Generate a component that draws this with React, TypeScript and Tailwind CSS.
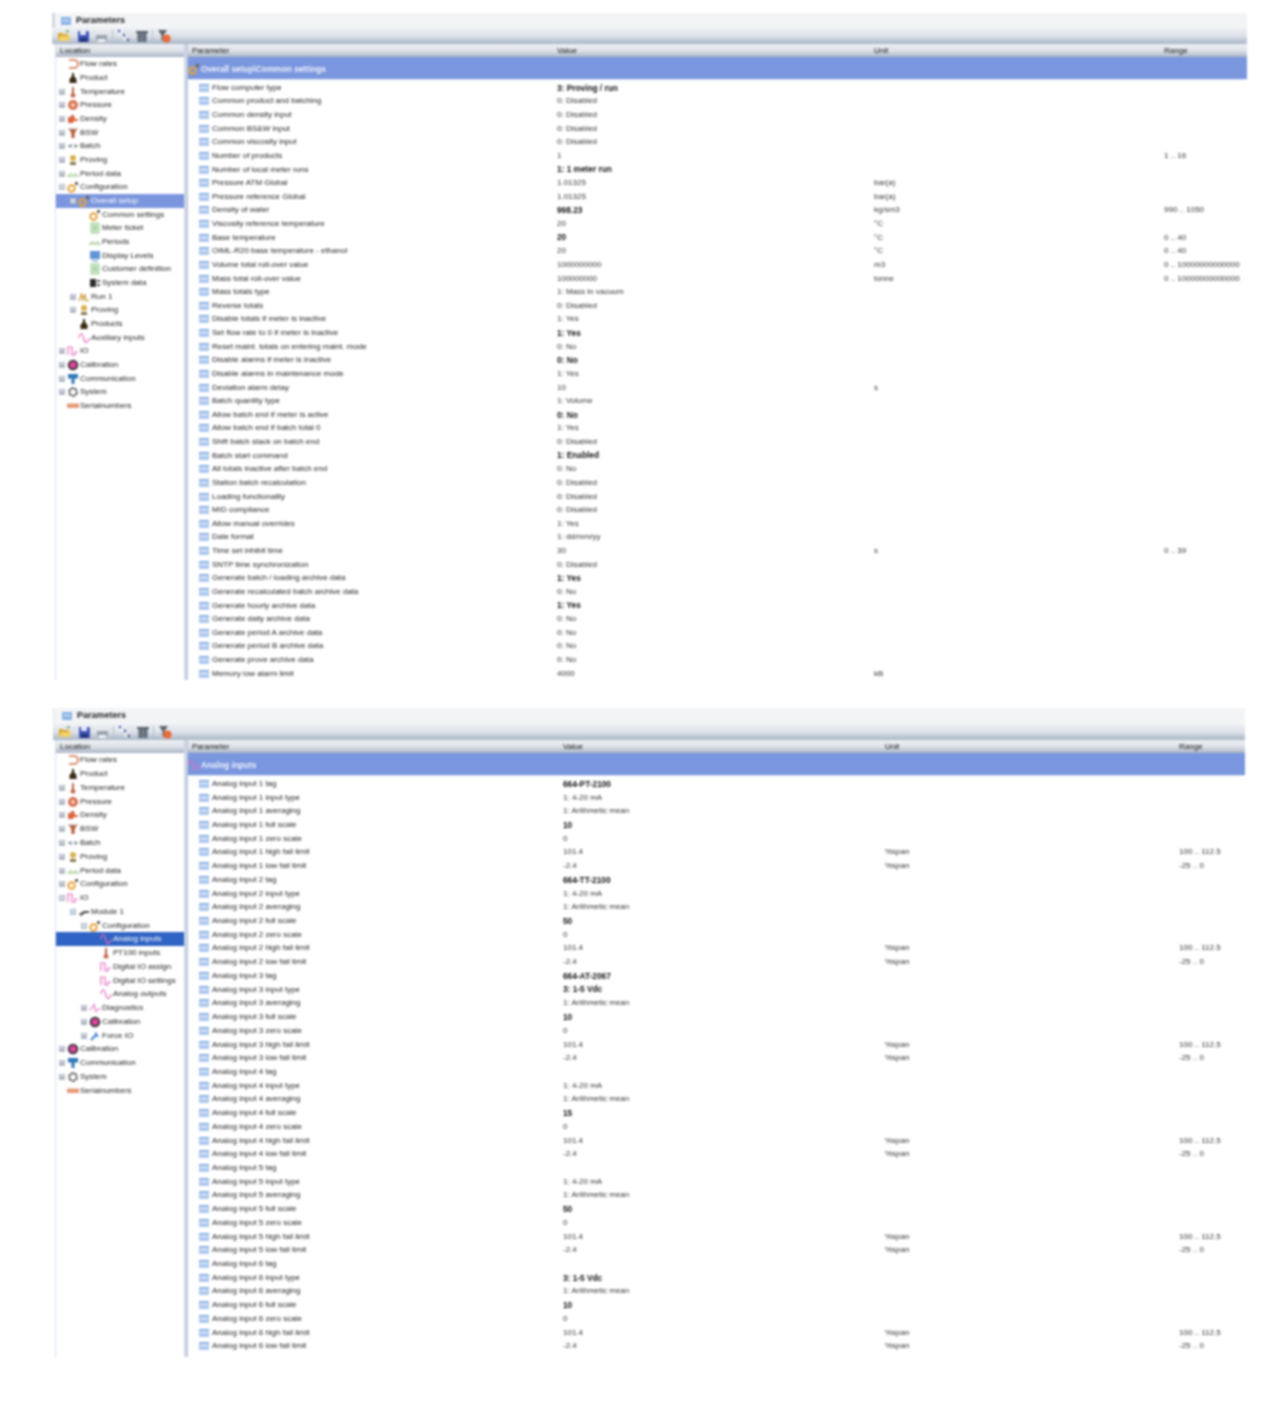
import React from "react";

type Row = { name: string; value?: string; unit?: string; range?: string; bold?: boolean };
type Kind =
  | "flow" | "bottle" | "thermo" | "gauge" | "density" | "bsw" | "batch" | "prove" | "period"
  | "config" | "ticket" | "display" | "system" | "run" | "wave" | "square" | "calib" | "comm"
  | "gear" | "serial" | "module" | "diag" | "wrench";
type TreeItem = { label: string; level: number; exp?: "+" | "-"; icon: Kind; selected?: boolean };

const overallRows: Row[] = [
  { name: "Flow computer type", value: "3: Proving / run", bold: true },
  { name: "Common product and batching", value: "0: Disabled" },
  { name: "Common density input", value: "0: Disabled" },
  { name: "Common BS&W input", value: "0: Disabled" },
  { name: "Common viscosity input", value: "0: Disabled" },
  { name: "Number of products", value: "1", range: "1 .. 16" },
  { name: "Number of local meter runs", value: "1: 1 meter run", bold: true },
  { name: "Pressure ATM Global", value: "1.01325", unit: "bar(a)" },
  { name: "Pressure reference Global", value: "1.01325", unit: "bar(a)" },
  { name: "Density of water", value: "998.23", unit: "kg/sm3", range: "990 .. 1050", bold: true },
  { name: "Viscosity reference temperature", value: "20", unit: "°C" },
  { name: "Base temperature", value: "20", unit: "°C", range: "0 .. 40", bold: true },
  { name: "OIML-R20 base temperature - ethanol", value: "20", unit: "°C", range: "0 .. 40" },
  { name: "Volume total roll-over value", value: "1000000000", unit: "m3", range: "0 .. 10000000000000" },
  { name: "Mass total roll-over value", value: "100000000", unit: "tonne", range: "0 .. 10000000000000" },
  { name: "Mass totals type", value: "1: Mass in vacuum" },
  { name: "Reverse totals", value: "0: Disabled" },
  { name: "Disable totals if meter is inactive", value: "1: Yes" },
  { name: "Set flow rate to 0 if meter is inactive", value: "1: Yes", bold: true },
  { name: "Reset maint. totals on entering maint. mode", value: "0: No" },
  { name: "Disable alarms if meter is inactive", value: "0: No", bold: true },
  { name: "Disable alarms in maintenance mode", value: "1: Yes" },
  { name: "Deviation alarm delay", value: "10", unit: "s" },
  { name: "Batch quantity type", value: "1: Volume" },
  { name: "Allow batch end if meter is active", value: "0: No", bold: true },
  { name: "Allow batch end if batch total 0", value: "1: Yes" },
  { name: "Shift batch stack on batch end", value: "0: Disabled" },
  { name: "Batch start command", value: "1: Enabled", bold: true },
  { name: "All totals inactive after batch end", value: "0: No" },
  { name: "Station batch recalculation", value: "0: Disabled" },
  { name: "Loading functionality", value: "0: Disabled" },
  { name: "MID compliance", value: "0: Disabled" },
  { name: "Allow manual overrides", value: "1: Yes" },
  { name: "Date format", value: "1: dd/mm/yy" },
  { name: "Time set inhibit time", value: "30", unit: "s", range: "0 .. 39" },
  { name: "SNTP time synchronization", value: "0: Disabled" },
  { name: "Generate batch / loading archive data", value: "1: Yes", bold: true },
  { name: "Generate recalculated batch archive data", value: "0: No" },
  { name: "Generate hourly archive data", value: "1: Yes", bold: true },
  { name: "Generate daily archive data", value: "0: No" },
  { name: "Generate period A archive data", value: "0: No" },
  { name: "Generate period B archive data", value: "0: No" },
  { name: "Generate prove archive data", value: "0: No" },
  { name: "Memory low alarm limit", value: "4000", unit: "kB" },
];

const analogSetup = [
  { tag: "664-PT-2100", type: "1: 4-20 mA", full: "10" },
  { tag: "664-TT-2100", type: "1: 4-20 mA", full: "50" },
  { tag: "664-AT-2067", type: "3: 1-5 Vdc", full: "10", typeBold: true },
  { tag: "", type: "1: 4-20 mA", full: "15" },
  { tag: "", type: "1: 4-20 mA", full: "50" },
  { tag: "", type: "3: 1-5 Vdc", full: "10", typeBold: true },
];

const analogRows: Row[] = analogSetup.flatMap((a, i) => {
  const n = `Analog input ${i + 1}`;
  return [
    { name: `${n} tag`, value: a.tag, bold: true },
    { name: `${n} input type`, value: a.type, bold: a.typeBold },
    { name: `${n} averaging`, value: "1: Arithmetic mean" },
    { name: `${n} full scale`, value: a.full, bold: true },
    { name: `${n} zero scale`, value: "0" },
    { name: `${n} high fail limit`, value: "101.4", unit: "%span", range: "100 .. 112.5" },
    { name: `${n} low fail limit`, value: "-2.4", unit: "%span", range: "-25 .. 0" },
  ];
});

const treeTop: TreeItem[] = [
  { label: "Flow rates", level: 0, icon: "flow" },
  { label: "Product", level: 0, icon: "bottle" },
  { label: "Temperature", level: 0, exp: "+", icon: "thermo" },
  { label: "Pressure", level: 0, exp: "+", icon: "gauge" },
  { label: "Density", level: 0, exp: "+", icon: "density" },
  { label: "BSW", level: 0, exp: "+", icon: "bsw" },
  { label: "Batch", level: 0, exp: "+", icon: "batch" },
  { label: "Proving", level: 0, exp: "+", icon: "prove" },
  { label: "Period data", level: 0, exp: "+", icon: "period" },
];

const treeBottom: TreeItem[] = [
  { label: "Calibration", level: 0, exp: "+", icon: "calib" },
  { label: "Communication", level: 0, exp: "+", icon: "comm" },
  { label: "System", level: 0, exp: "+", icon: "gear" },
  { label: "Serialnumbers", level: 0, icon: "serial" },
];

const overallTree: TreeItem[] = [
  ...treeTop,
  { label: "Configuration", level: 0, exp: "-", icon: "config" },
  { label: "Overall setup", level: 1, exp: "-", icon: "config", selected: true },
  { label: "Common settings", level: 2, icon: "config" },
  { label: "Meter ticket", level: 2, icon: "ticket" },
  { label: "Periods", level: 2, icon: "period" },
  { label: "Display Levels", level: 2, icon: "display" },
  { label: "Customer definition", level: 2, icon: "ticket" },
  { label: "System data", level: 2, icon: "system" },
  { label: "Run 1", level: 1, exp: "+", icon: "run" },
  { label: "Proving", level: 1, exp: "+", icon: "prove" },
  { label: "Products", level: 1, icon: "bottle" },
  { label: "Auxiliary inputs", level: 1, icon: "wave" },
  { label: "IO", level: 0, exp: "+", icon: "square" },
  ...treeBottom,
];

const analogTree: TreeItem[] = [
  ...treeTop,
  { label: "Configuration", level: 0, exp: "+", icon: "config" },
  { label: "IO", level: 0, exp: "-", icon: "square" },
  { label: "Module 1", level: 1, exp: "-", icon: "module" },
  { label: "Configuration", level: 2, exp: "-", icon: "config" },
  { label: "Analog inputs", level: 3, icon: "wave", selected: true },
  { label: "PT100 inputs", level: 3, icon: "thermo" },
  { label: "Digital IO assign", level: 3, icon: "square" },
  { label: "Digital IO settings", level: 3, icon: "square" },
  { label: "Analog outputs", level: 3, icon: "wave" },
  { label: "Diagnostics", level: 2, exp: "+", icon: "diag" },
  { label: "Calibration", level: 2, exp: "+", icon: "calib" },
  { label: "Force IO", level: 2, exp: "+", icon: "wrench" },
  ...treeBottom,
];

const indent = ["pl-[3px]", "pl-[14px]", "pl-[25px]", "pl-[36px]"];

function TreeIcon({ kind }: { kind: Kind }) {
  const box = { width: 12, height: 12, viewBox: "0 0 12 12", fill: "none" };
  switch (kind) {
    case "flow":
      return <svg {...box}><path d="M2 2h5a3.5 3.5 0 0 1 0 8H2" stroke="#d0714e" strokeWidth="1.6" /></svg>;
    case "bottle":
      return <svg {...box}><path d="M5 1h2v3l2.500 3v4h-7V7L5 4z" fill="#3a2a12" /></svg>;
    case "thermo":
      return <svg {...box}><path d="M5 1h2v6l1.500 2a2.500 2.500 0 1 1-5 0L5 7z" fill="#c0654a" /></svg>;
    case "gauge":
      return <svg {...box}><circle cx="6" cy="6" r="5" fill="#d9714f" /><circle cx="6" cy="6" r="2" fill="#f4d3c4" /></svg>;
    case "density":
      return <svg {...box}><path d="M1 10V4h3V2h3l1 4h3v2H7l-1 2z" fill="#d9653f" /></svg>;
    case "bsw":
      return <svg {...box}><path d="M1 1h10L7.500 6v5h-3V6z" fill="#b5552f" /><path d="M2 1h8v1.500H2z" fill="#c9c9c9" /></svg>;
    case "batch":
      return <svg {...box}><path d="M1 6h3M8 6h3" stroke="#7aa35c" strokeWidth="1.400" /><path d="M4 4v4M8 4v4" stroke="#5a6fa0" /></svg>;
    case "prove":
      return <svg {...box}><circle cx="6" cy="4" r="3" fill="#d9b04a" /><path d="M3 8h6v3H3z" fill="#8a7a50" /></svg>;
    case "period":
      return <svg {...box}><path d="M0 8h12" stroke="#9cc58a" strokeWidth="1.200" /><path d="M2 7l1.500-2L5 7M7 7l1.500-2L10 7" stroke="#9cc58a" /></svg>;
    case "config":
      return <svg {...box}><circle cx="4.500" cy="7.500" r="3.200" stroke="#e8a13a" strokeWidth="2" /><path d="M8 1h3v3H8z" fill="#66625a" /></svg>;
    case "ticket":
      return <svg {...box}><path d="M2 1h8v10H2z" fill="#c9e6c4" stroke="#a6cfa0" /><path d="M4 5h4M4 7h4" stroke="#8fbf88" /></svg>;
    case "display":
      return <svg {...box}><path d="M1 1h10v8H1z" fill="#5f95d6" /><path d="M3 10h6v1.500H3z" fill="#88a9d4" /></svg>;
    case "system":
      return <svg {...box}><path d="M1 2h6v8H1z" fill="#2c2c2c" /><path d="M8 3h3v2H8zM8 7h3v2H8z" fill="#555" /></svg>;
    case "run":
      return <svg {...box}><path d="M1 10l2.500-7L5 9l2-6 1 7 3-1" stroke="#c9973a" strokeWidth="1.200" /></svg>;
    case "wave":
      return <svg {...box}><path d="M0.500 6c2-6 3.500-6 5 0s3.500 6 6 0" stroke="#e56fc0" strokeWidth="1.200" /></svg>;
    case "square":
      return <svg {...box}><path d="M1 10V2h4v8h3V7h3" stroke="#e56fc0" strokeWidth="1.200" /></svg>;
    case "calib":
      return <svg {...box}><circle cx="6" cy="6" r="5.300" fill="#3d3640" /><circle cx="6" cy="6" r="3.300" fill="#e0459a" /></svg>;
    case "comm":
      return <svg {...box}><path d="M1 1h10v4.500H7.500V11h-3V5.500H1z" fill="#2f76b8" /></svg>;
    case "gear":
      return <svg {...box}><circle cx="6" cy="6" r="3.800" stroke="#555" strokeWidth="2" strokeDasharray="3 0.800" /></svg>;
    case "serial":
      return <svg {...box}><path d="M0 3.500h12v4.500H0z" fill="#e39a78" /></svg>;
    case "module":
      return <svg {...box}><path d="M1 8l5-3h5v2H7L3 10z" fill="#4a4a4a" /></svg>;
    case "diag":
      return <svg {...box}><path d="M0 7h3l2-5 2 8 1.500-3H12" stroke="#e56fc0" /></svg>;
    case "wrench":
      return <svg {...box}><path d="M2 10l5-5M7 2.500a2.500 2.500 0 0 0 2.500 3.500" stroke="#3f7fc9" strokeWidth="2" /></svg>;
  }
}

function ParamIcon() {
  return (
    <svg width="10" height="8" viewBox="0 0 10 8" className="shrink-0">
      <rect width="10" height="8" fill="#aec8ee" />
      <path d="M1.500 3.500h7" stroke="#f2f6fd" />
      <path d="M0 0.500h10" stroke="#7fa5de" />
    </svg>
  );
}

function Toolbar() {
  return (
    <div className="flex items-center h-[16px] shrink-0 pl-[5px] bg-gradient-to-b from-[#eef1f4] via-[#dde2e9] to-[#aab5c5]">
      <svg width="14" height="14" viewBox="0 0 14 14" className="mr-[6px]">
        <path d="M1 4h4l1 1h5v7H1z" fill="#d9a72e" />
        <path d="M3 7h11l-2.500 5H1z" fill="#f2d166" />
        <path d="M8 3l3-2 1 2z" fill="#46813a" />
      </svg>
      <svg width="13" height="13" viewBox="0 0 13 13" className="mr-[5px]">
        <path d="M1 1h10l1 1v10H1z" fill="#3f55b5" />
        <path d="M3 1h6v4H3z" fill="#dfe6f6" />
        <path d="M3 8h7v4H3z" fill="#24347f" />
      </svg>
      <svg width="13" height="13" viewBox="0 0 13 13" className="mr-[4px]">
        <path d="M3 1h6v4H3z" fill="#e6e8ec" />
        <path d="M1 5h11v5H1z" fill="#9aa3ae" />
        <path d="M3 9h7v3H3z" fill="#f0f1f4" />
      </svg>
      <div className="w-px h-[12px] bg-[#b4bdcb] mr-[4px]" />
      <svg width="13" height="14" viewBox="0 0 13 14" className="mr-[6px]">
        <path d="M2 1v5h5M7 6v5h3" stroke="#f4f6fa" strokeWidth="1.200" fill="none" />
        <path d="M1 1h2v2H1zM6 5h2v2H6zM10 10h2v2h-2z" fill="#2b3f9e" />
      </svg>
      <svg width="12" height="13" viewBox="0 0 12 13" className="mr-[4px]">
        <path d="M0 1h12v2H0z" fill="#56606c" />
        <path d="M1 3h10v9H1z" fill="#7c8794" />
        <path d="M4 3v9M8 3v9" stroke="#3d4651" />
      </svg>
      <div className="w-px h-[12px] bg-[#b4bdcb] mr-[4px]" />
      <svg width="14" height="14" viewBox="0 0 14 14">
        <path d="M1 1h9L6.500 6v6l-2-1V6z" fill="#59616b" />
        <circle cx="9.500" cy="9.500" r="4" fill="#ea6a38" />
      </svg>
    </div>
  );
}

function HeaderBar({ className, children }: { className: string; children: React.ReactNode }) {
  return (
    <div className={`h-[13px] shrink-0 items-center pt-px bg-gradient-to-b from-[#eceff3] via-[#dfe3e9] to-[#a9b4c4] text-[8px] text-[#111] ${className}`}>
      {children}
    </div>
  );
}

function Tree({ items, rowClass, selectedClass }: { items: TreeItem[]; rowClass: string; selectedClass: string }) {
  return (
    <div className="w-[129px] shrink-0 flex flex-col border-l border-[#d5dfee]">
      <HeaderBar className="flex pl-[4px]">Location</HeaderBar>
      <div className="pt-[0.500px]">
        {items.map((item, i) => (
          <div
            key={i}
            className={`flex items-center text-[8px] whitespace-nowrap ${rowClass} ${indent[item.level]} ${
              item.selected ? `${selectedClass} text-white` : "text-[#222]"
            }`}
          >
            <span className="w-[7px] shrink-0 flex items-center">
              {item.exp && (
                <span className="w-[6px] h-[6px] bg-[#dfe5ee] border-[0.500px] border-[#aab4c4] flex items-center justify-center text-[6px] leading-none text-[#444]">
                  {item.exp}
                </span>
              )}
            </span>
            <span className="w-[13px] shrink-0 flex items-center justify-center">
              <TreeIcon kind={item.icon} />
            </span>
            <span className="ml-[1px]">{item.label}</span>
          </div>
        ))}
      </div>
    </div>
  );
}

function ParamGrid({
  title,
  icon,
  rows,
  gridClass,
  rowClass,
}: {
  title: string;
  icon: Kind;
  rows: Row[];
  gridClass: string;
  rowClass: string;
}) {
  return (
    <div className="flex-1 min-w-0 flex flex-col">
      <HeaderBar className={`grid ${gridClass}`}>
        <span className="pl-[4px]">Parameter</span>
        <span>Value</span>
        <span>Unit</span>
        <span>Range</span>
      </HeaderBar>
      <div className="h-[23px] shrink-0 flex items-center pt-[2px] bg-[#7a96de] border-b border-[#dbe3f7] text-[#eef2fc] font-bold text-[8.300px]">
        <span className="w-[13px] flex justify-start">
          <TreeIcon kind={icon} />
        </span>
        <span>{title}</span>
      </div>
      <div className="pt-px text-[8px] text-[#222]">
        {rows.map((r, i) => (
          <div key={i} className={`grid items-center whitespace-nowrap ${gridClass} ${rowClass}`}>
            <span className="flex items-center gap-[3px] pl-[11px]">
              <ParamIcon />
              {r.name}
            </span>
            <span className={r.bold ? "font-bold text-[8.300px] text-[#111]" : "text-[#333]"}>{r.value}</span>
            <span className="text-[#333]">{r.unit}</span>
            <span className="text-[#333]">{r.range}</span>
          </div>
        ))}
      </div>
    </div>
  );
}

function Panel({
  className,
  titleClass,
  bodyClass,
  tree,
  treeRow,
  selectedClass,
  title,
  icon,
  rows,
  gridClass,
  rowClass,
}: {
  className: string;
  titleClass: string;
  bodyClass: string;
  tree: TreeItem[];
  treeRow: string;
  selectedClass: string;
  title: string;
  icon: Kind;
  rows: Row[];
  gridClass: string;
  rowClass: string;
}) {
  return (
    <div className={`flex flex-col overflow-hidden ${className}`}>
      <div className={`shrink-0 flex items-center bg-[#f2f4f6] gap-[5px] ${titleClass}`}>
        <svg width="10" height="8" viewBox="0 0 10 8">
          <rect width="10" height="8" fill="#8db4e6" />
          <path d="M1.500 3.500h7" stroke="#e8f0fb" />
        </svg>
        <span className="font-bold text-[9px] text-[#222]">Parameters</span>
      </div>
      <Toolbar />
      <div className={`flex flex-1 min-h-0 ${bodyClass}`}>
        <Tree items={tree} rowClass={treeRow} selectedClass={selectedClass} />
        <div className="w-[4px] shrink-0 bg-[#cdd6e6] border-r border-[#b5c1d6]" />
        <ParamGrid title={title} icon={icon} rows={rows} gridClass={gridClass} rowClass={rowClass} />
      </div>
    </div>
  );
}

export default function App() {
  return (
    <div className="min-h-[1407px] bg-white pt-[13px] pl-[52px] font-['Liberation_Sans',Arial,sans-serif] blur-[0.800px]">
      <Panel
        className="w-[1195px] h-[667px]"
        titleClass="h-[15px] pl-[6px] border-l-[3px] border-[#d3d7dd]"
        bodyClass="ml-[3px]"
        tree={overallTree}
        treeRow="h-[13.680px]"
        selectedClass="bg-[#7b96de]"
        title="Overall setup\Common settings"
        icon="config"
        rows={overallRows}
        gridClass="grid-cols-[369px_317px_290px_1fr]"
        rowClass="h-[13.630px]"
      />
      <Panel
        className="w-[1192px] h-[649px] ml-[1px] mt-[28px]"
        titleClass="h-[16px] pl-[8px] border-l-[1px] border-[#e3e6ea]"
        bodyClass="ml-[2px]"
        tree={analogTree}
        treeRow="h-[13.770px]"
        selectedClass="bg-[#2f63c4]"
        title="Analog inputs"
        icon="wave"
        rows={analogRows}
        gridClass="grid-cols-[375px_322px_294px_1fr]"
        rowClass="h-[13.730px]"
      />
    </div>
  );
}
